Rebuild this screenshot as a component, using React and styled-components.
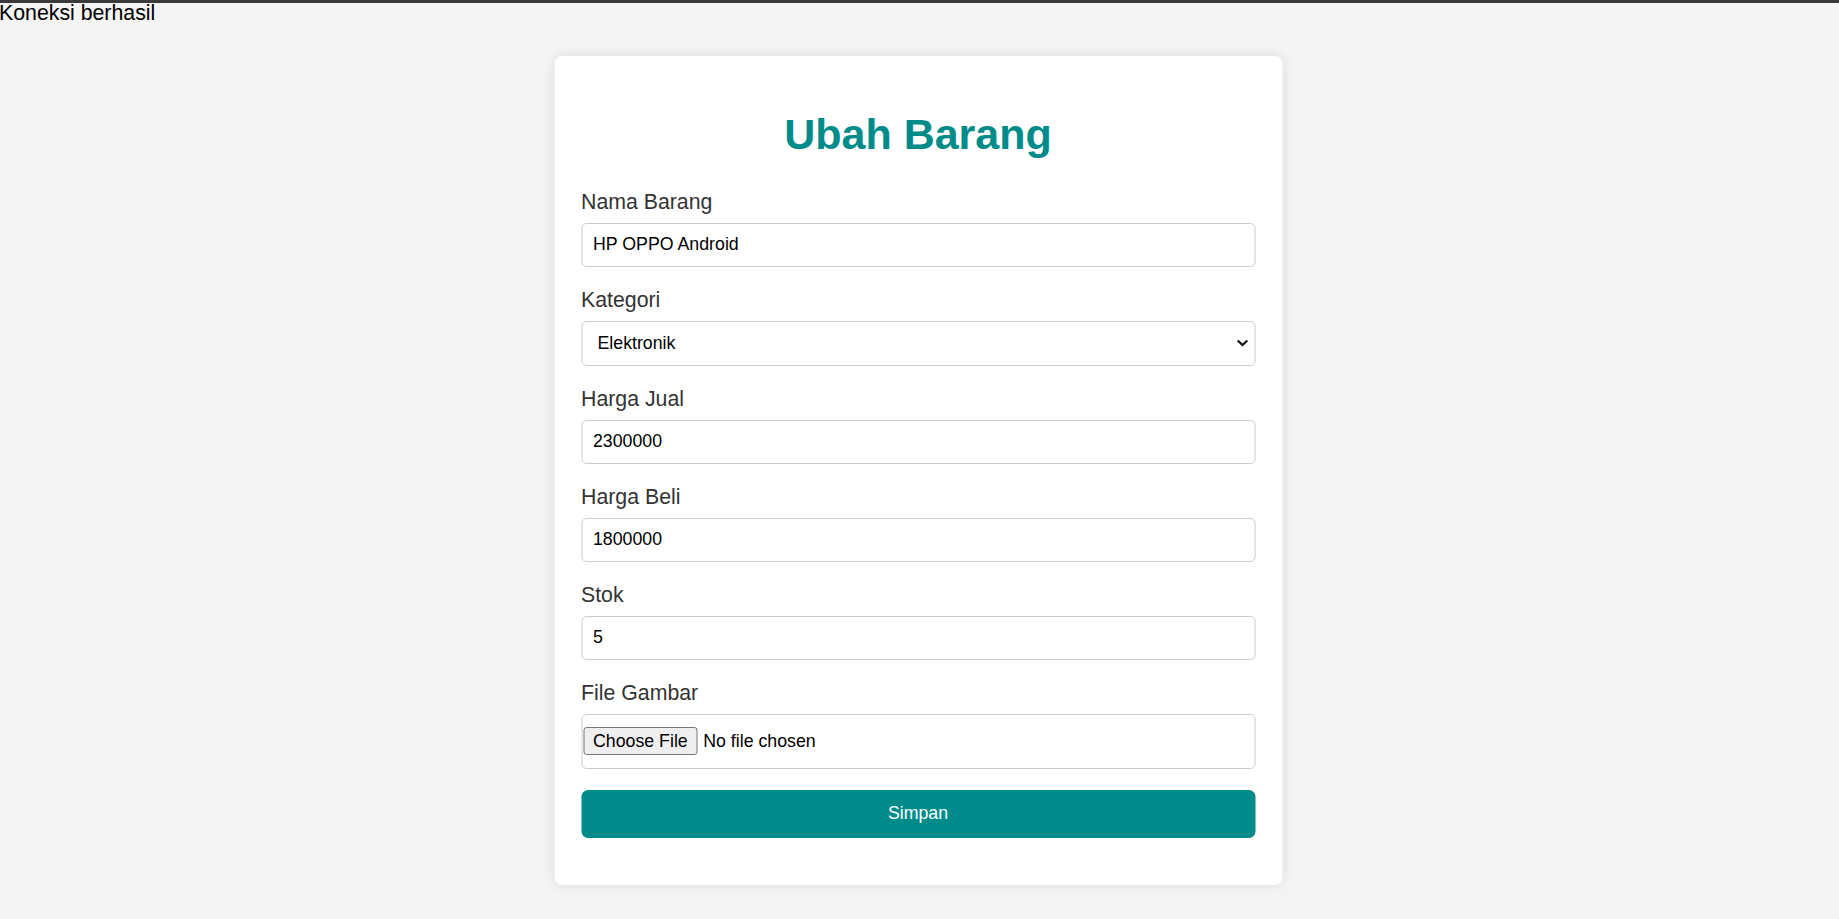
import React from 'react'
import styled, { createGlobalStyle } from 'styled-components'

const colors = {
  page: '#f4f4f4',
  teal: '#008b8b',
  label: '#333333',
  border: '#cccccc',
}

const GlobalStyle = createGlobalStyle`
  html, body {
    margin: 0;
    padding: 0;
    background: ${colors.page};
    font-family: "Liberation Sans", Arial, sans-serif;
  }
`

const WindowEdge = styled.div`
  position: fixed;
  top: 0;
  left: 0;
  right: 0;
  height: 2.5px;
  background: #3a3a3a;
`

const Page = styled.div`
  min-height: 919px;
  display: flex;
  flex-direction: column;
`

const Status = styled.div`
  font-size: 21.3px;
  line-height: 24.5px;
  padding-top: 1px;
  color: #000;
  margin-left: -1px;
`

const Card = styled.div`
  box-sizing: border-box;
  width: 728px;
  margin: 30.5px auto 0;
  padding: 27px;
  background: #fff;
  border-radius: 8px;
  box-shadow: 0 0 13px rgba(0, 0, 0, 0.1);
  transform: translateX(-1.5px);
`

const Title = styled.h1`
  margin: 26.5px 0 31px;
  font-size: 43px;
  line-height: 49px;
  font-weight: bold;
  color: ${colors.teal};
  text-align: center;
`

const Field = styled.div`
  display: flex;
  flex-direction: column;
  margin-bottom: 21px;
`

const Label = styled.label`
  font-size: 21.3px;
  line-height: 24.5px;
  color: ${colors.label};
  margin-bottom: 8.5px;
`

const TextInput = styled.input`
  box-sizing: border-box;
  width: 100%;
  height: 44px;
  padding: 0 11px;
  border: 1px solid ${colors.border};
  border-radius: 5px;
  font-family: "Liberation Sans", Arial, sans-serif;
  font-size: 17.75px;
  color: #000;
  background: #fff;
  outline: none;
`

const SelectWrap = styled.div`
  position: relative;
`

const Select = styled.select`
  box-sizing: border-box;
  width: 100%;
  height: 45px;
  padding: 0 30px 0 15.5px;
  border: 1px solid ${colors.border};
  border-radius: 5px;
  font-family: "Liberation Sans", Arial, sans-serif;
  font-size: 17.75px;
  color: #000;
  background: #fff;
  appearance: none;
  outline: none;
`

const Chevron = styled.svg`
  position: absolute;
  right: 7px;
  top: 50%;
  width: 12px;
  height: 8px;
  margin-top: -4px;
  pointer-events: none;
`

const FileBox = styled.label`
  box-sizing: border-box;
  display: flex;
  align-items: center;
  height: 55px;
  padding: 0 1px;
  border: 1px solid ${colors.border};
  border-radius: 5px;
  font-size: 17.75px;
  color: #000;
  background: #fff;
  cursor: pointer;
`

const HiddenFile = styled.input`
  display: none;
`

const FileButton = styled.span`
  box-sizing: border-box;
  display: inline-flex;
  align-items: center;
  height: 27.5px;
  padding: 0 9px;
  margin-right: 5.5px;
  background: #efefef;
  border: 1px solid #767676;
  border-radius: 3px;
  color: #000;
`

const Submit = styled.button`
  width: 100%;
  height: 48px;
  margin-bottom: 20.5px;
  border: none;
  border-radius: 6.5px;
  background: ${colors.teal};
  color: #fff;
  font-family: "Liberation Sans", Arial, sans-serif;
  font-size: 17.75px;
  cursor: pointer;
`

const fields = [
  { id: 'nama', label: 'Nama Barang', value: 'HP OPPO Android' },
  { id: 'kategori', label: 'Kategori', select: true },
  { id: 'jual', label: 'Harga Jual', value: '2300000' },
  { id: 'beli', label: 'Harga Beli', value: '1800000' },
  { id: 'stok', label: 'Stok', value: '5' },
]

function App () {
  return (
    <Page>
      <GlobalStyle />
      <WindowEdge />
      <Status>Koneksi berhasil</Status>
      <Card>
        <Title>Ubah Barang</Title>
        <form onSubmit={e => e.preventDefault()}>
          {fields.map(f => (
            <Field key={f.id}>
              <Label htmlFor={f.id}>{f.label}</Label>
              {f.select ? (
                <SelectWrap>
                  <Select id={f.id} defaultValue="Elektronik">
                    <option>Elektronik</option>
                    <option>Pakaian</option>
                    <option>Makanan</option>
                  </Select>
                  <Chevron viewBox="0 0 12 8">
                    <polyline
                      points="1.2,1.5 6,6 10.8,1.5"
                      fill="none"
                      stroke="#111"
                      strokeWidth="2.2"
                    />
                  </Chevron>
                </SelectWrap>
              ) : (
                <TextInput id={f.id} type="text" defaultValue={f.value} />
              )}
            </Field>
          ))}
          <Field>
            <Label htmlFor="gambar">File Gambar</Label>
            <FileBox>
              <HiddenFile id="gambar" type="file" />
              <FileButton>Choose File</FileButton>
              <span>No file chosen</span>
            </FileBox>
          </Field>
          <Submit type="submit">Simpan</Submit>
        </form>
      </Card>
    </Page>
  )
}

export default App
